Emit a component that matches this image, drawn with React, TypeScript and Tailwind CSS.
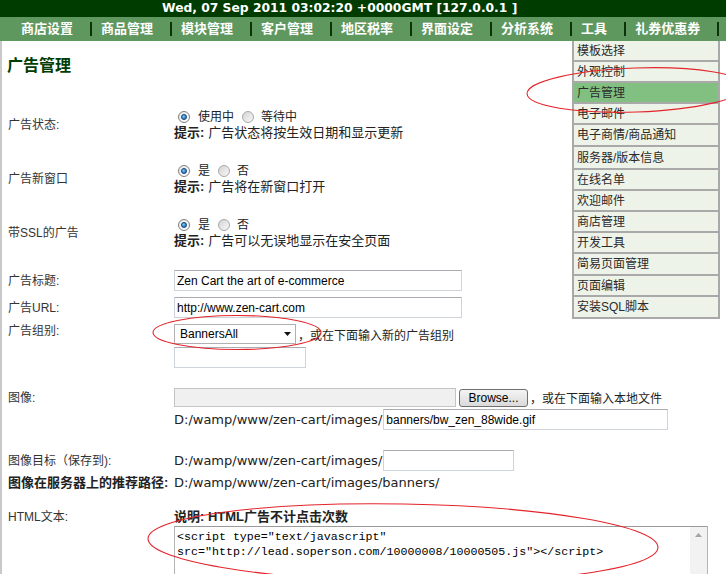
import type { ReactNode } from "react"

const cjk = "font-['Liberation_Sans','Noto_Sans_CJK_SC',sans-serif]"

const navItems = ["商店设置", "商品管理", "模块管理", "客户管理", "地区税率", "界面设定", "分析系统", "工具", "礼券优惠券"]

// row heights follow the screenshot: rows with latin glyphs sit a little taller
const menuItems: { label: string; h: string; active?: boolean }[] = [
  { label: "模板选择", h: "h-[21px]" },
  { label: "外观控制", h: "h-[21px]" },
  { label: "广告管理", h: "h-[21px]", active: true },
  { label: "电子邮件", h: "h-[21px]" },
  { label: "电子商情/商品通知", h: "h-[22px]" },
  { label: "服务器/版本信息", h: "h-[23px]" },
  { label: "在线名单", h: "h-[21px]" },
  { label: "欢迎邮件", h: "h-[21px]" },
  { label: "商店管理", h: "h-[21px]" },
  { label: "开发工具", h: "h-[21px]" },
  { label: "简易页面管理", h: "h-[22px]" },
  { label: "页面编辑", h: "h-[21px]" },
  { label: "安装SQL脚本", h: "h-[22px]" },
]

function Radio({ checked }: { checked?: boolean }) {
  return (
    <span
      className={
        checked
          ? "flex h-[12px] w-[12px] items-center justify-center rounded-full border border-[#7f7f7f] bg-gradient-to-br from-[#e6e6e6] to-white"
          : "flex h-[12px] w-[12px] items-center justify-center rounded-full border border-[#a8a8a8] bg-gradient-to-br from-[#d4d4d4] to-[#f8f8f8]"
      }
    >
      {checked ? (
        <span className="h-[6px] w-[6px] rounded-full border border-[#0b3f7a] bg-[radial-gradient(circle_at_35%_35%,#7cc6f5,#1060b0)]" />
      ) : null}
    </span>
  )
}

function RadioBlock({ label, a, b, hint }: { label: string; a: string; b: string; hint: string }) {
  return (
    <div className="flex h-[32px] items-center">
      <div className="w-[172px] pl-[6px] text-[12px] text-[#333]">{label}</div>
      <div className="flex flex-col">
        <div className="flex h-[16px] items-center text-[12px] text-[#222]">
          <span className="ml-[4px]">
            <Radio checked />
          </span>
          <span className="ml-[8px]">{a}</span>
          <span className="ml-[8px]">
            <Radio />
          </span>
          <span className="ml-[7px]">{b}</span>
        </div>
        <div className="flex h-[16px] items-center text-[13px] text-[#222]">
          <b>提示:</b>
          <span className="ml-[4px]">{hint}</span>
        </div>
      </div>
    </div>
  )
}

function TextBox({ width, value, grey }: { width: string; value?: string; grey?: boolean }) {
  return (
    <div
      className={`${width} flex h-[21px] items-center border border-[#cfd3da] border-t-[#abadb3] pl-[2px] font-['Liberation_Sans',sans-serif] text-[12px] text-black ${
        grey ? "bg-[#f0f0f0]" : "bg-white"
      }`}
    >
      {value}
    </div>
  )
}

function Label({ children, bold }: { children: ReactNode; bold?: boolean }) {
  return (
    <div className={`w-[172px] shrink-0 pl-[6px] leading-[16px] ${bold ? "text-[13px] font-bold text-[#222]" : "text-[12px] text-[#333]"}`}>
      {children}
    </div>
  )
}

const pathCls = "font-['DejaVu_Sans',sans-serif] text-[13px] text-[#222]"

export default function App() {
  return (
    <div className={`relative h-[574px] w-[726px] overflow-hidden bg-white ${cjk}`}>
      <div className="flex h-[17px] items-center overflow-hidden whitespace-nowrap bg-[#003c00] pl-[162px] font-['DejaVu_Sans',sans-serif] text-[12.3px] font-bold text-white">
        Wed, 07 Sep 2011 03:02:20 +0000GMT [127.0.0.1 ]
      </div>
      <nav className="flex h-[24px] items-center overflow-hidden whitespace-nowrap bg-[#5f985f] pl-[21px] text-[13px] font-bold text-white">
        {navItems.map((item) => (
          <div key={item} className="flex shrink-0 items-center">
            <span>{item}</span>
            <span className="ml-[17px] mr-[9px] h-[14px] w-[2px] bg-[#0a330a]" />
          </div>
        ))}
      </nav>

      <main className="h-[533px] border-l-2 border-[#c9c9c9]">
        <div className="h-[68px] pl-[5px] pt-[14px]">
          <h1 className="text-[16px] font-bold leading-[22px] text-[#003d00]">广告管理</h1>
        </div>

        <RadioBlock label="广告状态:" a="使用中" b="等待中" hint="广告状态将按生效日期和显示更新" />
        <div className="mt-[22px]">
          <RadioBlock label="广告新窗口" a="是" b="否" hint="广告将在新窗口打开" />
        </div>
        <div className="mt-[22px]">
          <RadioBlock label="带SSL的广告" a="是" b="否" hint="广告可以无误地显示在安全页面" />
        </div>

        <div className="mt-[21px] flex h-[21px] items-center">
          <Label>广告标题:</Label>
          <TextBox width="w-[288px]" value="Zen Cart the art of e-commerce" />
        </div>
        <div className="mt-[6px] flex h-[21px] items-center">
          <Label>广告URL:</Label>
          <TextBox width="w-[288px]" value="http://www.zen-cart.com" />
        </div>
        <div className="mt-[5px] flex items-start">
          <Label>广告组别:</Label>
          <div className="flex flex-col">
            <div className="flex items-center">
              <div className="flex h-[20px] w-[122px] items-center justify-between border border-[#b0b0b0] bg-white pl-[5px] pr-[4px] font-['Liberation_Sans',sans-serif] text-[12px] text-black">
                <span>BannersAll</span>
                <svg width="7" height="4" viewBox="0 0 7 4">
                  <path d="M0 0h7L3.5 4z" fill="#111" />
                </svg>
              </div>
              <span className="ml-[2px] pt-[4px] text-[12px] text-[#222]">，或在下面输入新的广告组别</span>
            </div>
            <div className="mt-[2px]">
              <TextBox width="w-[132px]" />
            </div>
          </div>
        </div>

        <div className="mt-[20px] flex items-start">
          <div className="flex h-[19px] items-center">
            <Label>图像:</Label>
          </div>
          <div className="flex flex-col">
            <div className="flex h-[19px] items-center">
              <div className="h-[19px] w-[282px] border border-[#c4c4c4] bg-[#f0f0f0]" />
              <div className="ml-[3px] flex h-[18px] w-[69px] items-center justify-center rounded-[3px] border border-[#707070] bg-gradient-to-b from-[#f4f4f4] to-[#dadada] font-['Liberation_Sans',sans-serif] text-[12px] text-black">
                Browse...
              </div>
              <span className="ml-[2px] pt-[3px] text-[12px] text-[#222]">，或在下面输入本地文件</span>
            </div>
            <div className="mt-[2px] flex h-[21px] items-center">
              <span className={pathCls}>D:/wamp/www/zen-cart/images/</span>
              <div className="ml-[1px]">
                <TextBox width="w-[285px]" value="banners/bw_zen_88wide.gif" />
              </div>
            </div>
          </div>
        </div>

        <div className="mt-[20px] flex h-[21px] items-center">
          <Label>图像目标（保存到):</Label>
          <span className={pathCls}>D:/wamp/www/zen-cart/images/</span>
          <div className="ml-[1px]">
            <TextBox width="w-[131px]" />
          </div>
        </div>
        <div className="mt-[4px] flex h-[16px] items-center">
          <Label bold>图像在服务器上的推荐路径:</Label>
          <span className={pathCls}>D:/wamp/www/zen-cart/images/banners/</span>
        </div>

        <div className="mt-[18px] flex items-start">
          <Label>HTML文本:</Label>
          <div className="flex flex-col">
            <div className="h-[16px] text-[13px] font-bold leading-[16px] text-[#222]">说明: HTML广告不计点击次数</div>
            <div className="mt-[1px] flex h-[80px] w-[534px] border border-[#b4b4b4] border-t-[#9a9a9a] bg-white">
              <div className="flex-1 whitespace-pre pl-[2px] pt-[3px] font-['Liberation_Mono',monospace] text-[11.65px] leading-[14.5px] text-black">
                {'<script type="text/javascript"\nsrc="http://lead.soperson.com/10000008/10000505.js"></script>'}
              </div>
              <div className="flex w-[17px] justify-center bg-[#f2f2f2] pt-[6px]">
                <svg width="7" height="4" viewBox="0 0 7 4">
                  <path d="M3.5 0L7 4H0z" fill="#a4a4a4" />
                </svg>
              </div>
            </div>
          </div>
        </div>
      </main>

      <div className="absolute left-[572px] top-[41px] w-[148px] border-x-2 border-[#a9a9a9] text-[12px] text-[#2a2a2a]">
        {menuItems.map((item) => (
          <div
            key={item.label}
            className={`${item.h} flex items-center border-b-2 border-[#a9a9a9] pl-[3px] ${
              item.active ? "bg-[#82c082]" : "bg-[#eef3e9]"
            }`}
          >
            {item.label}
          </div>
        ))}
      </div>

      <svg className="pointer-events-none absolute left-0 top-0" width="726" height="574" viewBox="0 0 726 574">
        <g fill="none" stroke="#e3242b" strokeWidth="1.1">
          <ellipse cx="636" cy="90" rx="109" ry="22" transform="rotate(-2 636 90)" />
          <ellipse cx="237" cy="332.5" rx="84" ry="17" />
          <ellipse cx="403" cy="543" rx="255" ry="39" transform="rotate(1 403 543)" />
        </g>
      </svg>
    </div>
  )
}
